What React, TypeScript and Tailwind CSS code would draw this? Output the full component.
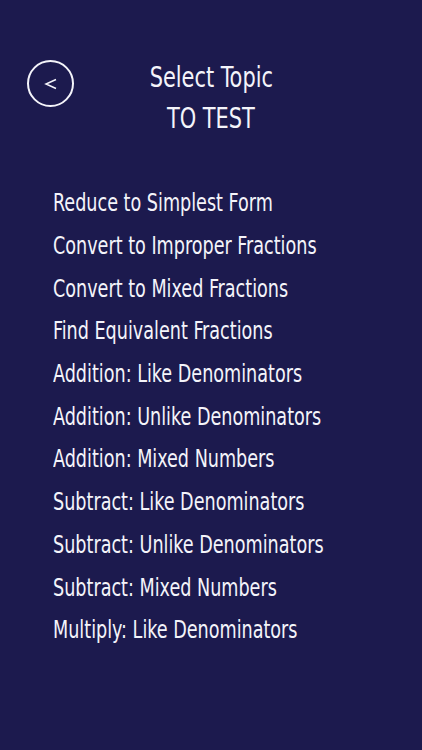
const topics = [
  "Reduce to Simplest Form",
  "Convert to Improper Fractions",
  "Convert to Mixed Fractions",
  "Find Equivalent Fractions",
  "Addition: Like Denominators",
  "Addition: Unlike Denominators",
  "Addition: Mixed Numbers",
  "Subtract: Like Denominators",
  "Subtract: Unlike Denominators",
  "Subtract: Mixed Numbers",
  "Multiply: Like Denominators",
];

export default function App() {
  return (
    <div
      className="w-[422px] h-[750px] bg-[#1c1a4e] text-[#f4f4fa] overflow-hidden"
      style={{ fontFamily: '"DejaVu Sans Condensed", "Liberation Sans", sans-serif' }}
    >
      <div className="relative pt-[57px] h-[180px]">
        <button className="absolute left-[27px] top-[60px] w-[47px] h-[47px] rounded-full border-2 border-[#f4f4fa] flex items-center justify-center">
          <svg width="16" height="16" viewBox="0 0 16 16" fill="none" stroke="#f4f4fa" strokeWidth="1.5">
            <path d="M13 3.5 L3 8 L13 12.5" />
          </svg>
        </button>
        <div className="flex flex-col items-center text-[28px] leading-[41px]">
          <div className="scale-x-[0.83]">Select Topic</div>
          <div className="scale-x-[0.83]">TO TEST</div>
        </div>
      </div>
      <ul className="pl-[53px] pt-[2px]">
        {topics.map((t) => (
          <li key={t} className="h-[42.7px] flex items-center text-[24px]">
            <span className="origin-left scale-x-[0.815] whitespace-nowrap">{t}</span>
          </li>
        ))}
      </ul>
    </div>
  );
}
